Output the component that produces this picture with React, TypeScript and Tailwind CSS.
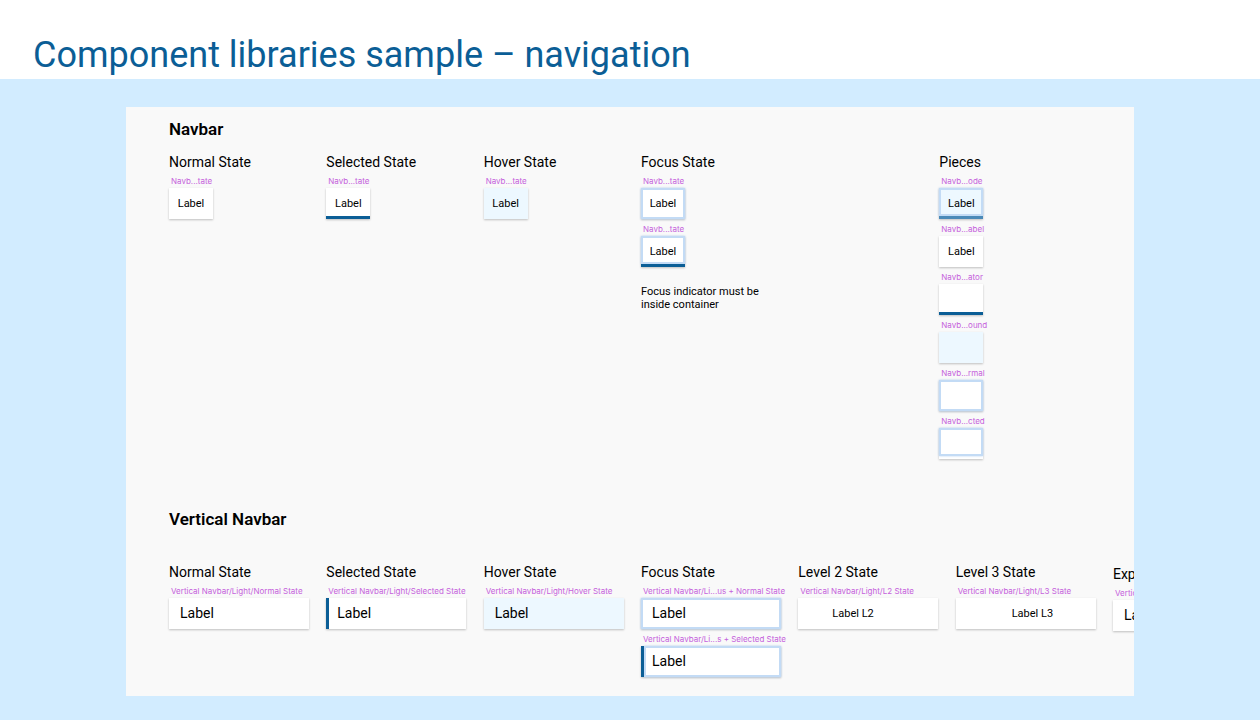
import type { ReactNode } from 'react';
import clsx from 'clsx';

interface NavItemProps {
  tag: string;
  label?: string;
  vertical?: boolean;
  selected?: boolean;
  hover?: boolean;
  focus?: boolean;
  // leaves room under the focus ring for the selected indicator
  inset?: boolean;
  faded?: boolean;
  labelClass?: string;
}

function NavItem({ tag, label, vertical, selected, hover, focus, inset, faded, labelClass }: NavItemProps) {
  const boxClass = clsx(
    'grid h-[31px] shadow-[0_1px_2px_rgba(0,0,0,0.24)]',
    vertical ? 'w-[140px]' : 'w-11',
    hover ? 'bg-[#edf8ff]' : 'bg-white'
  );

  const content = (
    <>
      {focus && (
        <span
          className={clsx(
            '[grid-area:1/1] border-2 border-[#c3dbf5] shadow-[0_0_2px_#b5d0ee]',
            inset && (vertical ? 'ml-[3px]' : 'mb-[3px]')
          )}
        />
      )}
      {selected && (
        <span
          className={clsx(
            '[grid-area:1/1]',
            vertical ? 'w-[3px]' : 'h-[3px] self-end',
            faded ? 'bg-[#4b8ab8]' : 'bg-[#0b5e96]'
          )}
        />
      )}
      {label && (
        <span
          className={clsx(
            '[grid-area:1/1] self-center whitespace-nowrap text-black',
            labelClass ?? (vertical ? 'pb-0.5 pl-[11px] text-sm' : 'pt-0.5 text-center text-[11px]')
          )}
        >
          {label}
        </span>
      )}
    </>
  );

  return (
    <div>
      <p className="mb-px h-3 w-0 whitespace-nowrap pl-0.5 font-[Inter,sans-serif] text-[8px] leading-3 text-[#c561dc]">
        {tag}
      </p>
      {label ? (
        <a href="#" className={boxClass}>{content}</a>
      ) : (
        <div className={boxClass}>{content}</div>
      )}
    </div>
  );
}

interface StateColumnProps {
  title: string;
  className?: string;
  children: ReactNode;
}

function StateColumn({ title, className, children }: StateColumnProps) {
  return (
    <div className={className}>
      <h3 className="mb-[3px] whitespace-nowrap text-sm leading-5 text-black">{title}</h3>
      <div className="flex flex-col gap-1">{children}</div>
    </div>
  );
}

export default function App() {
  return (
    <div className="flex min-h-screen flex-col bg-[#d2ecff] font-[Roboto,sans-serif]">
      <header className="bg-white px-[33px] pb-[3px] pt-[34px]">
        <h1 className="text-4xl leading-[42px] text-[#0b5e96]">
          Component libraries sample – navigation
        </h1>
      </header>

      <main className="mx-[10%] mb-6 mt-7 overflow-hidden bg-[#f9f9f9] pb-[19px] pl-[43px] pr-[21px] pt-2.5">
        <section>
          <h2 className="mb-[11px] text-[17px] font-semibold leading-6 text-black">Navbar</h2>
          <div className="grid grid-cols-6">
            <StateColumn title="Normal State">
              <NavItem tag="Navb...tate" label="Label" />
            </StateColumn>
            <StateColumn title="Selected State">
              <NavItem tag="Navb...tate" label="Label" selected />
            </StateColumn>
            <StateColumn title="Hover State">
              <NavItem tag="Navb...tate" label="Label" hover />
            </StateColumn>
            <StateColumn title="Focus State">
              <NavItem tag="Navb...tate" label="Label" focus />
              <NavItem tag="Navb...tate" label="Label" focus selected inset />
              <p className="mt-3.5 w-32 text-[11px] leading-[13px] text-black">
                Focus indicator must be inside container
              </p>
            </StateColumn>
            <StateColumn title="Pieces" className="col-span-2 pl-[141px]">
              <NavItem tag="Navb...ode" label="Label" hover focus selected inset faded />
              <NavItem tag="Navb...abel" label="Label" />
              <NavItem tag="Navb...ator" selected />
              <NavItem tag="Navb...ound" hover />
              <NavItem tag="Navb...rmal" focus />
              <NavItem tag="Navb...cted" focus inset />
            </StateColumn>
          </div>
        </section>

        <section className="mt-12">
          <h2 className="mb-[31px] text-[17px] font-semibold leading-6 text-black">Vertical Navbar</h2>
          <div className="grid auto-cols-[calc(100%/6)] grid-flow-col">
            <StateColumn title="Normal State">
              <NavItem vertical tag="Vertical Navbar/Light/Normal State" label="Label" />
            </StateColumn>
            <StateColumn title="Selected State">
              <NavItem vertical tag="Vertical Navbar/Light/Selected State" label="Label" selected />
            </StateColumn>
            <StateColumn title="Hover State">
              <NavItem vertical tag="Vertical Navbar/Light/Hover State" label="Label" hover />
            </StateColumn>
            <StateColumn title="Focus State">
              <NavItem vertical tag="Vertical Navbar/Li...us + Normal State" label="Label" focus />
              <NavItem vertical tag="Vertical Navbar/Li...s + Selected State" label="Label" focus selected inset />
            </StateColumn>
            <StateColumn title="Level 2 State">
              <NavItem vertical tag="Vertical Navbar/Light/L2 State" label="Label L2" labelClass="pl-[34px] pt-0.5 text-[11px]" />
            </StateColumn>
            <StateColumn title="Level 3 State">
              <NavItem vertical tag="Vertical Navbar/Light/L3 State" label="Label L3" labelClass="pl-14 pt-0.5 text-[11px]" />
            </StateColumn>
            <StateColumn title="Expanded State" className="pt-0.5">
              <NavItem vertical tag="Vertical Navbar/Light/Expanded State" label="Label" />
            </StateColumn>
          </div>
        </section>
      </main>
    </div>
  );
}
